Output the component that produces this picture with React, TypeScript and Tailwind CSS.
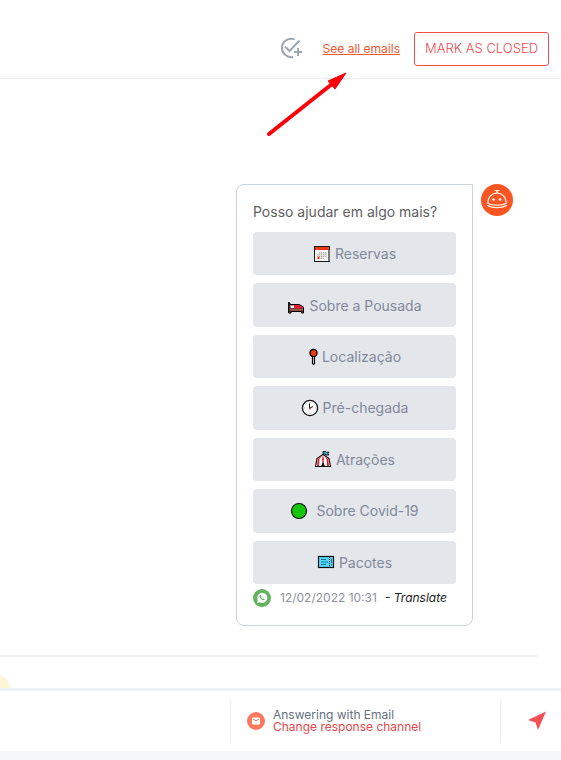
import React from 'react';

const iconClass = "w-[18px] h-[18px] shrink-0";

const CalendarIcon = () => (
    <svg className={iconClass} viewBox="0 0 18 18" aria-hidden="true">
        <path d="M1 1h16v16H1z" fill="#1a1a1a" />
        <path d="M15 5h2v11h-2z" fill="#777" />
        <path d="M2 2h14v3H2z" fill="#ea3a1a" />
        <path d="M2 5h13v11H2z" fill="#f7f7f7" />
        <path d="M6 7h8v5h-3v2H4v-5h2z" fill="#dcdcdc" />
        <path d="M6 7.500h8M4 9.500h10M4 11.500h10M4 13.500h7" stroke="#b5b5b5" strokeDasharray="1 1" />
        <path d="M4 11h3v3H4z" fill="#f2937f" />
        <path d="M5 12h1v2H5z" fill="#ea3a1a" />
    </svg>
);

const BedIcon = () => (
    <svg className={iconClass} viewBox="0 0 18 18" aria-hidden="true">
        <path d="M1.500 6.500L3 7v1.500h9L16.500 11v6h-2v-1.500H4V17H1.500z" fill="#5b3027" stroke="#000" strokeLinejoin="round" />
        <path d="M3.500 9.500h4V12h-4z" fill="#fff" />
        <path d="M7 9h5l4 2.500v1H7z" fill="#ed1c2e" />
        <path d="M3 13h13v1.500H3z" fill="#a0685c" />
    </svg>
);

const PinIcon = () => (
    <svg className="w-[10px] h-[18px] shrink-0" viewBox="0 0 10 18" aria-hidden="true">
        <path d="M4.500 8h2v7.500l-1 1-1-1z" fill="#eee" stroke="#000" strokeWidth="1.200" strokeLinejoin="round" />
        <circle cx="5.500" cy="5" r="3.600" fill="#ea3a1a" stroke="#000" strokeWidth="1.200" />
    </svg>
);

const ClockIcon = () => (
    <svg className={iconClass} viewBox="0 0 18 18" aria-hidden="true">
        <circle cx="9" cy="9" r="7.600" fill="#fff" stroke="#111" strokeWidth="1.300" />
        <path d="M9 3v1M9 14v1M3 9h1M14 9h1" stroke="#999" />
        <path d="M8.500 4.500V9M9 9l3-1.500" stroke="#111" fill="none" />
        <circle cx="9" cy="9.500" r="1" fill="#ea1c3a" />
    </svg>
);

const TentIcon = () => (
    <svg className={iconClass} viewBox="0 0 18 18" aria-hidden="true">
        <path d="M9 5V1.500h2.500l1 .7H15l-1 1.600 1 1.200h-3l-1-.8H9z" fill="#4aa8c8" stroke="#111" strokeWidth=".9" />
        <path d="M9 4.500l-6 4-1.500 8h15l-1.500-8z" fill="#fff" stroke="#111" strokeWidth="1.200" strokeLinejoin="round" />
        <path d="M8 5.500L5.500 9 5 16H3l.7-7zM10 5.500L12.500 9l.5 7h2l-.7-7zM9 5l-1 4 .5 3h1l.5-3z" fill="#e5242f" />
        <path d="M9 11l2 5.500H7z" fill="#111" />
    </svg>
);

const GreenCircleIcon = () => (
    <svg className={iconClass} viewBox="0 0 18 18" aria-hidden="true">
        <circle cx="9" cy="9" r="7.500" fill="#16c60c" stroke="#111" strokeWidth="1.200" />
    </svg>
);

const TicketIcon = () => (
    <svg className={iconClass} viewBox="0 0 18 18" aria-hidden="true">
        <rect x="1.500" y="3.500" width="15" height="11" fill="#55d8f7" stroke="#111" strokeWidth="1.200" />
        <path d="M4 6.500h5M4 9h7M4 11.500h5" stroke="#1878a8" />
        <path d="M14.500 6v4M14.500 11v1.500" stroke="#1878a8" />
        <path d="M12.500 4v10" stroke="#111" strokeDasharray="1 1" />
    </svg>
);

const options = [
    { label: "Reservas", icon: <CalendarIcon />, gap: "gap-1" },
    { label: "Sobre a Pousada", icon: <BedIcon />, gap: "gap-1" },
    { label: "Localização", icon: <PinIcon />, gap: "gap-1" },
    { label: "Pré-chegada", icon: <ClockIcon />, gap: "gap-1" },
    { label: "Atrações", icon: <TentIcon />, gap: "gap-1" },
    { label: "Sobre Covid-19", icon: <GreenCircleIcon />, gap: "gap-2" },
    { label: "Pacotes", icon: <TicketIcon />, gap: "gap-1" },
];

const Header = () => (
    <header className="relative flex items-center justify-end h-[79px] pt-8 pb-3 pr-3 border-b border-[#ebedf1]">
        <button aria-label="Add task" className="mr-5">
            <svg className="w-6 h-6" viewBox="0 0 24 24" fill="none" stroke="#9ca8b5" strokeWidth="2" aria-hidden="true">
                <path d="M15.500 2.400A9.200 9.200 0 1 0 14 20" />
                <path d="M6 9.500l4.500 4.500L20.500 3.500" />
                <path d="M19 11v8M15 15h8" />
            </svg>
        </button>
        <a href="#" className="text-[12px] leading-4 text-[#f4592f] underline mr-[14px]">See all emails</a>
        <button className="h-[34px] px-[10px] text-[13px] font-light text-[#f04b50] border border-[#f04b50] rounded-[3px]">MARK AS CLOSED</button>
        <svg className="absolute right-[213px] top-[70px] w-[84px] h-[68px]" viewBox="0 0 84 68" aria-hidden="true">
            <path d="M5 64L68 14" stroke="#fb0007" strokeWidth="4" strokeLinecap="round" />
            <path d="M82 3L64 11l7 8z" fill="#fb0007" stroke="#fb0007" />
        </svg>
    </header>
);

const Avatar = () => (
    <svg className="w-8 h-8 shrink-0" viewBox="0 0 32 32" aria-label="Bot">
        <circle cx="16" cy="16" r="16" fill="#ff5522" />
        <g fill="none" stroke="#fff" strokeLinecap="round" strokeWidth="1.200">
            <path d="M14 6.500h4M16 6.500v2.500" />
            <path d="M7 19.500C6.500 13 11 9 16 9s9.500 4 9 10.500c-5 2.300-13 2.300-18 0z" />
            <path d="M6.500 21.500c5 3 14 3 19 0" />
        </g>
        <circle cx="12.500" cy="15.500" r="1.300" fill="#fff" />
        <circle cx="19" cy="15.500" r="1.300" fill="#fff" />
    </svg>
);

const Message = () => (
    <div className="flex justify-end items-start gap-2 pr-12">
        <div className="w-[237px] px-4 pt-[17px] pb-[18px] border border-[#cdd3dc] rounded-lg rounded-tr-none">
            <p className="text-[14px] leading-5 text-[#616161] mb-[10px]">Posso ajudar em algo mais?</p>
            <div className="grid auto-rows-fr gap-2 h-[352px]">
                {options.map((option) => (
                    <button key={option.label} className={`flex items-center justify-center ${option.gap} bg-[#e3e6eb] rounded text-[14px] text-[#82899a]`}>
                        {option.icon}
                        {option.label}
                    </button>
                ))}
            </div>
            <div className="flex items-center h-[18px] mt-[5px] text-[12px] whitespace-nowrap">
                <svg className="w-[18px] h-[18px] shrink-0" viewBox="0 0 18 18" aria-label="WhatsApp">
                    <circle cx="9" cy="9" r="9" fill="#62b35c" />
                    <path d="M4 14l.8-2.800A5.100 5.100 0 1 1 6.700 13.200z" fill="#fff" />
                    <path d="M7 6.200c-.8.7-.6 2 .8 3.500s3 2 3.700 1.100c.3-.5.200-.8-.2-1l-.8-.4-.7.600c-.8-.3-1.400-.9-1.800-1.700l.5-.7-.5-1.200c-.3-.5-.6-.5-1-.2z" fill="#62b35c" />
                </svg>
                <time className="ml-[9px] text-[#8f929c]">12/02/2022 10:31</time>
                <button className="ml-2 italic text-[#222]">- Translate</button>
            </div>
        </div>
        <Avatar />
    </div>
);

const Footer = () => (
    <footer className="border-t-[3px] border-[#edf0f5]">
        <div className="flex h-[60px] py-2">
            <div className="flex-1" />
            <div className="flex items-center gap-2 w-[270px] pl-4 border-l border-[#edf0f5]">
                <svg className="w-[18px] h-[18px] shrink-0" viewBox="0 0 18 18" aria-hidden="true">
                    <circle cx="9" cy="9" r="9" fill="#ff7860" />
                    <rect x="5" y="5.500" width="8" height="7" rx=".7" fill="#fff" />
                    <path d="M6 7l3 1.800L12 7" fill="none" stroke="#ff7860" />
                </svg>
                <div className="flex flex-col items-start text-[12px] leading-3">
                    <span className="text-[#66707f]">Answering with Email</span>
                    <button className="text-[#e5484d]">Change response channel</button>
                </div>
            </div>
            <button aria-label="Send" className="flex items-center justify-end w-[61px] pr-[14px] border-l border-[#edf0f5]">
                <svg className="w-5 h-5" viewBox="0 0 20 20" aria-hidden="true">
                    <path d="M19 0.500L1 9l7.500 2.500L11 19z" fill="#f54f55" />
                </svg>
            </button>
        </div>
        <div className="h-[9px] bg-[#f5f6fa]" />
    </footer>
);

export default function App() {
    return (
        <div className="flex flex-col min-h-screen bg-white font-['Inter',sans-serif] overflow-hidden">
            <Header />
            <main className="relative flex-1 pt-[105px]">
                <Message />
                <div className="h-[2px] mt-[29px] mr-6 bg-[#edf0f5]" />
                <div className="absolute left-0 bottom-0 w-[9px] h-[12px] bg-[#fcf4d4] rounded-tr-full" />
            </main>
            <Footer />
        </div>
    );
}
